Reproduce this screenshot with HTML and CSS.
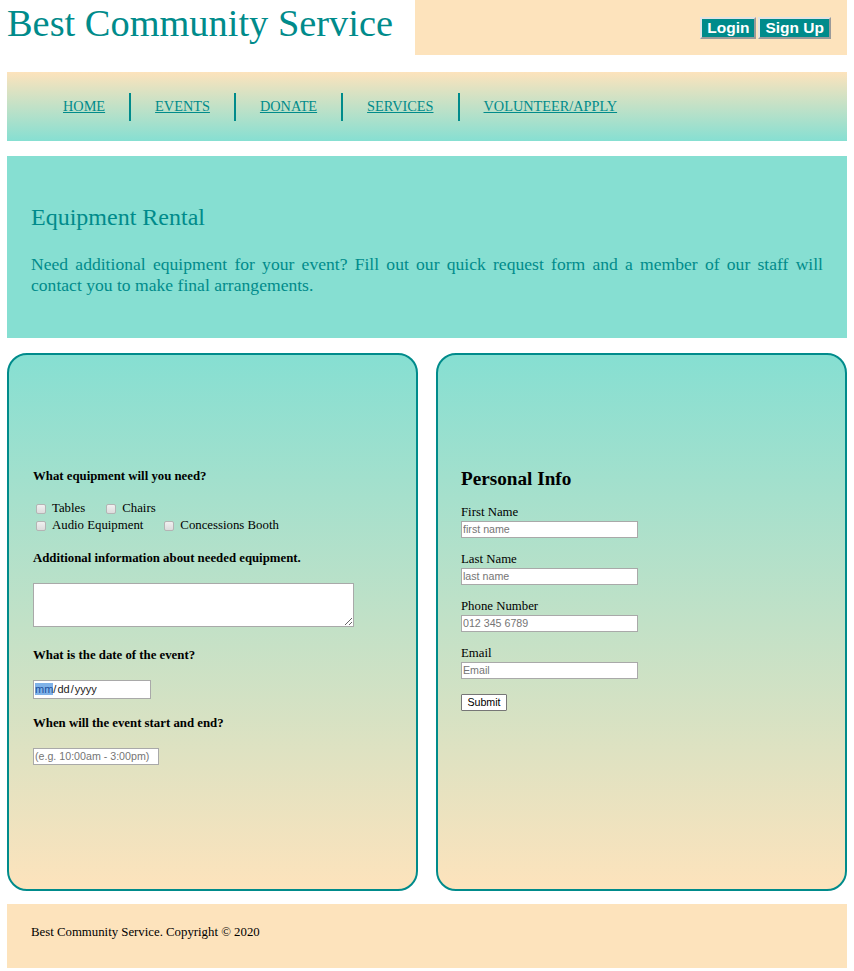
FILE: index.html
```html
<!DOCTYPE html>
<html lang="en">
<head>
<meta charset="utf-8">
<title>Best Community Service - Equipment Rental</title>
<link rel="stylesheet" href="styles.css">
</head>
<body>
<div class="page">
  <header class="site-header">
    <h1 class="site-title">Best Community Service</h1>
    <div class="account">
      <button class="acct-btn" type="button">Login</button>
      <button class="acct-btn" type="button">Sign Up</button>
    </div>
  </header>

  <nav class="main-nav">
    <a class="nav-link first" href="#">HOME</a>
    <span class="nav-sep"></span>
    <a class="nav-link" href="#">EVENTS</a>
    <span class="nav-sep"></span>
    <a class="nav-link" href="#">DONATE</a>
    <span class="nav-sep"></span>
    <a class="nav-link" href="#">SERVICES</a>
    <span class="nav-sep"></span>
    <a class="nav-link" href="#">VOLUNTEER/APPLY</a>
  </nav>

  <section class="hero">
    <h2 class="hero-title">Equipment Rental</h2>
    <p class="hero-text">Need additional equipment for your event? Fill out our quick request form and a member of our staff will contact you to make final arrangements.</p>
  </section>

  <form class="panels">
    <div class="panel panel-left">
      <h4 class="question q-first">What equipment will you need?</h4>
      <div class="check-row row-first">
        <input class="cb" type="checkbox" id="c1"><label class="cb-label" for="c1">Tables</label>
        <input class="cb" type="checkbox" id="c2"><label class="cb-label" for="c2">Chairs</label>
      </div>
      <div class="check-row">
        <input class="cb" type="checkbox" id="c3"><label class="cb-label" for="c3">Audio Equipment</label>
        <input class="cb" type="checkbox" id="c4"><label class="cb-label" for="c4">Concessions Booth</label>
      </div>
      <h4 class="question">Additional information about needed equipment.</h4>
      <textarea class="info-area"></textarea>
      <h4 class="question q-after-area">What is the date of the event?</h4>
      <input class="date-input" type="date">
      <h4 class="question">When will the event start and end?</h4>
      <input class="time-input" type="text" placeholder="(e.g. 10:00am - 3:00pm)">
    </div>

    <div class="panel panel-right">
      <h3 class="panel-heading">Personal Info</h3>
      <div class="field field-first">
        <label class="field-label" for="fn">First Name</label>
        <input class="text-input" id="fn" type="text" placeholder="first name">
      </div>
      <div class="field">
        <label class="field-label" for="ln">Last Name</label>
        <input class="text-input" id="ln" type="text" placeholder="last name">
      </div>
      <div class="field">
        <label class="field-label" for="ph">Phone Number</label>
        <input class="text-input" id="ph" type="text" placeholder="012 345 6789">
      </div>
      <div class="field">
        <label class="field-label" for="em">Email</label>
        <input class="text-input" id="em" type="text" placeholder="Email">
      </div>
      <button class="submit-btn" type="button">Submit</button>
    </div>
  </form>

  <footer class="site-footer">Best Community Service. Copyright © 2020</footer>
</div>
</body>
</html>
```

FILE: styles.css
```css
html, body {
  margin: 0;
  padding: 0;
  background: #ffffff;
}

body {
  font-family: "Liberation Serif", "Times New Roman", serif;
  font-size: 16px;
  color: #000;
}

.page {
  padding: 0 7px 3px;
}

/* Header */
.site-header {
  display: flex;
  height: 55px;
}

.site-title {
  flex: none;
  width: 408px;
  margin: 0;
  font-size: 38.4px;
  font-weight: normal;
  line-height: 46px;
  color: #008b8b;
}

.account {
  flex: 1;
  display: flex;
  justify-content: flex-end;
  align-items: center;
  gap: 2px;
  padding-right: 16px;
  background: #fde3bc;
}

.acct-btn {
  box-sizing: border-box;
  height: 22px;
  padding: 0 5px;
  margin: 0;
  background: #008b8b;
  color: #ffffff;
  font-family: "Liberation Sans", Arial, sans-serif;
  font-weight: bold;
  font-size: 15.5px;
  line-height: 18px;
  border: 2px solid;
  border-color: #e3e3e3 #9a9a9a #9a9a9a #e3e3e3;
  cursor: pointer;
}

/* Navigation */
.main-nav {
  margin-top: 17px;
  height: 69px;
  display: flex;
  align-items: center;
  padding-left: 56px;
  background: linear-gradient(to bottom, #fde3bc, #86dfd2);
}

.nav-link {
  font-size: 14.3px;
  color: #008b8b;
  text-decoration: underline;
  padding: 0 24px;
}

.nav-link.first {
  padding-left: 0;
}

.nav-sep {
  width: 2px;
  height: 28px;
  background: #008b8b;
}

/* Hero */
.hero {
  margin-top: 15px;
  background: #86dfd2;
  padding: 47px 24px 42px;
  color: #008b8b;
}

.hero-title {
  margin: 0;
  font-size: 24px;
  font-weight: normal;
  line-height: 28px;
}

.hero-text {
  margin: 23px 0 0;
  font-size: 17.6px;
  line-height: 21px;
  text-align: justify;
}

/* Panels */
.panels {
  margin: 15px 0 0;
  display: grid;
  grid-template-columns: 411px 411px;
  column-gap: 18px;
}

.panel {
  box-sizing: border-box;
  height: 538px;
  border: 2px solid #008b8b;
  border-radius: 20px;
  padding: 114px 24px 0;
  background: linear-gradient(to bottom, #86dfd2, #fde3bc);
  display: flex;
  flex-direction: column;
  align-items: flex-start;
}

.panel-right {
  padding-left: 23px;
}

.question {
  margin: 17px 0 0;
  font-size: 12.8px;
  font-weight: bold;
  line-height: 15px;
}

.question.q-first {
  margin-top: 0;
}

.question.q-after-area {
  margin-top: 21px;
}

.check-row {
  display: flex;
  align-items: center;
  height: 17px;
  font-size: 12.8px;
  line-height: 17px;
}

.check-row.row-first {
  margin-top: 16px;
}

.cb {
  appearance: none;
  -webkit-appearance: none;
  box-sizing: border-box;
  width: 10px;
  height: 10px;
  margin: 0 6px 0 3px;
  flex: none;
  border: 1px solid #b4b4b4;
  border-radius: 2px;
  background: linear-gradient(to bottom, #f0f0f0, #dcdcdc);
}

.cb-label {
  margin-right: 18px;
}

.info-area {
  box-sizing: border-box;
  width: 321px;
  height: 44px;
  margin: 16.5px 0 0;
  border: 1px solid #a9a9a9;
  background: #fff;
  padding: 2px;
  font-family: "Liberation Sans", Arial, sans-serif;
  font-size: 10.67px;
}

.date-input,
.time-input,
.text-input {
  box-sizing: border-box;
  margin: 0;
  padding: 0 1px;
  border: 1px solid #a9a9a9;
  background: #fff;
  font-family: "Liberation Sans", Arial, sans-serif;
  font-size: 10.67px;
  color: #333;
  border-radius: 0;
  outline: none;
}

.date-input {
  width: 118px;
  height: 19px;
  margin-top: 17px;
  line-height: 17px;
  font-size: 11px;
  color: #222;
}

.date-input::-webkit-calendar-picker-indicator {
  display: none;
}

.date-input::-webkit-datetime-edit {
  padding: 0;
}

.date-input::-webkit-datetime-edit-month-field {
  background: #7fb2e8;
  color: #1c4f9c;
  padding: 0;
}

.time-input {
  width: 126px;
  height: 17px;
  margin-top: 17px;
}

.time-input::placeholder,
.text-input::placeholder {
  color: #757575;
}

.panel-heading {
  margin: -1px 0 0;
  font-size: 19.2px;
  font-weight: bold;
  line-height: 22px;
}

.field {
  display: flex;
  flex-direction: column;
  align-items: flex-start;
  margin-top: 14.5px;
}

.field.field-first {
  margin-top: 15px;
}

.field-label {
  font-size: 12.8px;
  line-height: 15px;
}

.text-input {
  width: 177px;
  height: 17px;
  margin-top: 0.5px;
}

.submit-btn {
  box-sizing: border-box;
  margin-top: 15px;
  width: 46px;
  height: 17px;
  padding: 0;
  border: 1px solid #767676;
  border-radius: 1px;
  background: #ffffff;
  font-family: "Liberation Sans", Arial, sans-serif;
  font-size: 10.67px;
  line-height: 15px;
  color: #000;
}

/* Footer */
.site-footer {
  margin-top: 13px;
  height: 64px;
  box-sizing: border-box;
  padding: 21px 24px 0;
  background: #fde3bc;
  font-size: 12.8px;
  line-height: 15px;
}
```
